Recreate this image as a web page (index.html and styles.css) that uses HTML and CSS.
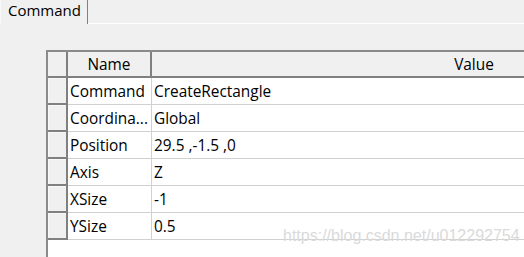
FILE: index.html
```html
<!DOCTYPE html>
<html lang="en">
<head>
    <meta charset="UTF-8">
    <meta name="viewport" content="width=device-width, initial-scale=1.0">
    <title>Command Properties</title>
    <link rel="stylesheet" href="styles.css">
</head>
<body>

<!-- Tab bar -->
<div class="tabbar">
    <div class="tab">Command</div>
    <div class="tab-rest"></div>
</div>

<!-- Property grid -->
<div class="pane">
    <div class="grid">
        <table class="props">
            <colgroup>
                <col class="col-row">
                <col class="col-name">
                <col class="col-value">
            </colgroup>
            <thead>
                <tr>
                    <th class="corner"></th>
                    <th class="head head-name">Name</th>
                    <th class="head">Value</th>
                </tr>
            </thead>
            <tbody>
                <tr><th class="rowhead"></th><td class="name">Command</td><td>CreateRectangle</td></tr>
                <tr><th class="rowhead"></th><td class="name">Coordina...</td><td>Global</td></tr>
                <tr><th class="rowhead"></th><td class="name">Position</td><td>29.5 ,-1.5 ,0</td></tr>
                <tr><th class="rowhead"></th><td class="name">Axis</td><td>Z</td></tr>
                <tr><th class="rowhead"></th><td class="name">XSize</td><td>-1</td></tr>
                <tr><th class="rowhead"></th><td class="name">YSize</td><td>0.5</td></tr>
            </tbody>
        </table>
    </div>
</div>

<!-- Watermark -->
<div class="watermark">https://blog.csdn.net/u012292754</div>

</body>
</html>
```

FILE: styles.css
```css
/* Basic styling */
body {
    margin: 0;
    height: 100vh;
    overflow: hidden;
    background-color: #f0f0f0;
    font-family: "Open Sans", "Noto Sans", sans-serif;
    font-size: 15px;
    color: #000000;
}

/* Tab bar */
.tabbar {
    display: flex;
    height: 24px;
}

.tab {
    width: 88px;
    padding: 0 0 0 7px;
    box-sizing: border-box;
    line-height: 20px;
    border-left: 1px solid #fafafa;
    border-right: 1px solid #808080;
}

.tab-rest {
    flex: 1;
    border-bottom: 1px solid #ffffff;
}

/* Property grid */
.pane {
    padding: 26px 0 0 46px;
}

.grid {
    height: calc(100vh - 50px);
    overflow: hidden;
    background-color: #ffffff;
    border-left: 2px solid #8a8a8a;
    border-top: 2px solid #8a8a8a;
}

.props {
    border-collapse: separate;
    border-spacing: 0;
    table-layout: fixed;
    width: 748px;
    font-size: 15.4px;
}

.col-row { width: 20px; }
.col-name { width: 84px; }
.col-value { width: 644px; }

.props th,
.props td {
    box-sizing: border-box;
    padding: 0 2px;
    white-space: nowrap;
    overflow: hidden;
    font-weight: normal;
}

.props thead th {
    height: 26px;
    background-color: #f0f0f0;
    border-bottom: 2px solid #808080;
    text-align: center;
}

.corner,
.head-name {
    border-right: 2px solid #808080;
}

.props td {
    height: 27px;
    border-bottom: 1px solid #d0d0d0;
    text-align: left;
}

.props td.name {
    border-right: 1px solid #d0d0d0;
}

.rowhead {
    height: 27px;
    background-color: #f0f0f0;
    border-right: 2px solid #808080;
    border-bottom: 2px solid #808080;
    box-shadow: inset 1px 1px 0 #f8f8f8;
}

/* Watermark */
.watermark {
    position: absolute;
    left: 283px;
    top: 227px;
    font-family: "Liberation Sans", Arial, sans-serif;
    font-size: 16px;
    color: #dadada;
}
```
